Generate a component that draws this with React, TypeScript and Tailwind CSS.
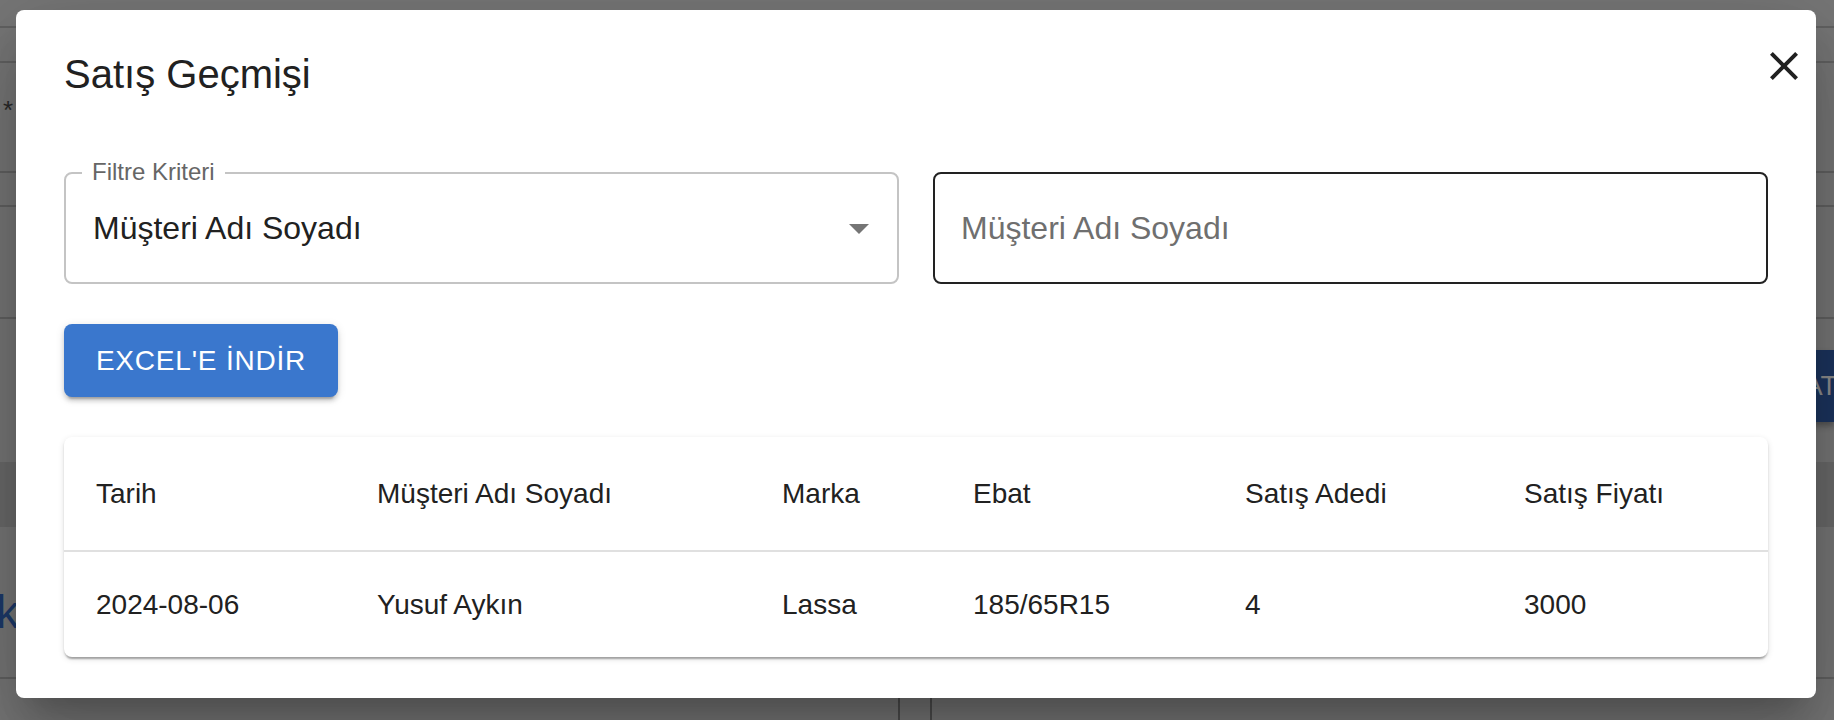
import React from 'react'

const columns = ['Tarih', 'Müşteri Adı Soyadı', 'Marka', 'Ebat', 'Satış Adedi', 'Satış Fiyatı']

const rows = [['2024-08-06', 'Yusuf Aykın', 'Lassa', '185/65R15', '4', '3000']]

const gridCols = 'grid grid-cols-[281px_405px_191px_272px_279px_276px]'

const CloseIcon = () => (
  <svg viewBox="0 0 24 24" className="w-[48px] h-[48px]" fill="#212121">
    <path d="M19 6.41 17.59 5 12 10.59 6.41 5 5 6.41 10.59 12 5 17.59 6.41 19 12 13.41 17.59 19 19 17.59 13.41 12z" />
  </svg>
)

const ArrowDropDown = () => (
  <svg viewBox="0 0 24 24" className="w-[48px] h-[48px]" fill="#757575">
    <path d="M7 10l5 5 5-5z" />
  </svg>
)

// the page that sits behind the dialog, already dimmed by the backdrop
const Backdrop = () => (
  <div className="flex flex-col h-[720px]">
    <div className="h-[28px] border-b-2 border-[#626262] shrink-0"></div>
    <div className="h-[35px] border-b-2 border-[#626262] shrink-0"></div>
    <div className="h-[110px] border-b-2 border-[#626262] shrink-0 pt-[34px] pl-[3px] text-[26px] leading-none text-[#2a2a2a]">
      *
    </div>
    <div className="h-[34px] border-b-2 border-[#626262] shrink-0"></div>
    <div className="h-[112px] border-b-2 border-[#626262] shrink-0"></div>
    <div className="h-[143px] shrink-0 flex justify-end pt-[31px]">
      <div className="w-[40px] h-[72px] bg-[#1c355f] pl-[10px] text-[28px] leading-[72px] text-[#8d8d8d] whitespace-nowrap overflow-hidden shadow-[0_4px_6px_rgba(0,0,0,0.3)]">
        AT
      </div>
    </div>
    <div className="h-[65px] shrink-0 bg-[#6b6b6b]"></div>
    <div className="h-[152px] shrink-0 border-b-2 border-[#626262] pt-[62px]">
      <span className="block -ml-[4px] text-[46px] leading-none text-[#1d3b6c]">k</span>
    </div>
    <div className="flex-1 flex">
      <div className="w-[900px] border-r-2 border-[#4e4e4e]"></div>
      <div className="w-[32px] border-r-2 border-[#4e4e4e]"></div>
      <div className="flex-1"></div>
    </div>
  </div>
)

export default function App() {
  return (
    <div className="relative w-[1834px] h-[720px] overflow-hidden bg-[#777777] font-['Liberation_Sans',Arial,sans-serif]">
      <Backdrop />

      <div className="absolute left-[16px] top-[10px] w-[1800px] h-[688px] bg-white rounded-[8px] px-[48px] shadow-[0_22px_30px_-14px_rgba(0,0,0,0.2),0_48px_76px_6px_rgba(0,0,0,0.14),0_18px_92px_16px_rgba(0,0,0,0.12)]">
        <h2 className="pt-[32px] text-[40px] leading-[64px] text-[#212121]">Satış Geçmişi</h2>
        <button className="absolute right-[8px] top-[32px]">
          <CloseIcon />
        </button>

        <div className="mt-[66px] grid grid-cols-2 gap-[34px]">
          <div className="relative h-[112px] border-2 border-[#c4c4c4] rounded-[8px] flex items-center pl-[27px]">
            <span className="absolute -top-[14px] left-[16px] px-[10px] bg-white text-[24px] leading-[24px] text-[#666666]">
              Filtre Kriteri
            </span>
            <span className="text-[32px] leading-[46px] text-[#212121]">Müşteri Adı Soyadı</span>
            <span className="absolute right-[14px] top-[30px]">
              <ArrowDropDown />
            </span>
          </div>
          <div className="h-[112px] border-2 border-[#222222] rounded-[8px] flex items-center pl-[26px]">
            <span className="text-[32px] leading-[46px] text-[#6f6f6f]">Müşteri Adı Soyadı</span>
          </div>
        </div>

        <button className="mt-[40px] block h-[73px] w-[274px] rounded-[8px] bg-[#3a77cd] text-white text-[28px] leading-[49px] tracking-[0.8px] uppercase shadow-[0_6px_2px_-4px_rgba(0,0,0,0.2),0_4px_4px_0_rgba(0,0,0,0.14),0_2px_10px_0_rgba(0,0,0,0.12)]">
          EXCEL'E İNDİR
        </button>

        <div className="mt-[40px] rounded-[8px] bg-white overflow-hidden shadow-[0_4px_2px_-2px_rgba(0,0,0,0.2),0_2px_2px_0_rgba(0,0,0,0.14),0_2px_6px_0_rgba(0,0,0,0.12)]">
          <div className={`${gridCols} h-[115px] border-b-2 border-[#e0e0e0]`}>
            {columns.map((c) => (
              <div key={c} className="pl-[32px] flex items-center text-[28px] text-[#212121]">
                {c}
              </div>
            ))}
          </div>
          {rows.map((r, i) => (
            <div key={i} className={`${gridCols} h-[105px]`}>
              {r.map((v, j) => (
                <div key={j} className="pl-[32px] flex items-center text-[28px] text-[#212121]">
                  {v}
                </div>
              ))}
            </div>
          ))}
        </div>
      </div>
    </div>
  )
}
